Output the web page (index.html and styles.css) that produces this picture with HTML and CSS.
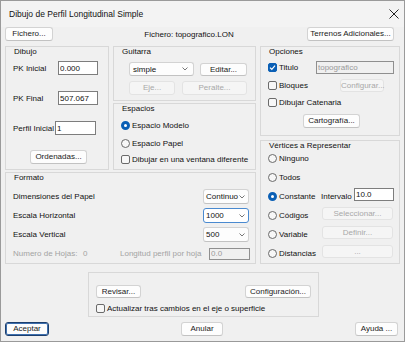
FILE: index.html
```html
<!DOCTYPE html>
<html lang="es">

<head>
    <meta charset="UTF-8">
    <title>Dibujo de Perfil Longitudinal Simple</title>
    <link rel="stylesheet" href="styles.css">
</head>

<body>
    <div class="window">
        <div class="titlebar">
            <span>Dibujo de Perfil Longitudinal Simple</span>
            <svg class="close" width="10" height="10" viewBox="0 0 10 10">
                <path d="M0.5 0.5 L9.5 9.5 M9.5 0.5 L0.5 9.5" stroke="#222" stroke-width="1" fill="none" />
            </svg>
        </div>

        <div class="content">
            <div class="toprow">
                <button class="btn w-fichero">Fichero...</button>
                <span class="filename">Fichero: topografico.LON</span>
                <button class="btn w-terrenos">Terrenos Adicionales...</button>
            </div>

            <div class="main">
                <div class="leftpart">
                    <div class="upper">
                        <!-- Dibujo -->
                        <div class="group dibujo">
                            <div class="caption">Dibujo</div>
                            <div class="field-row r-first">
                                <label class="pk-label">PK Inicial</label>
                                <input class="tb w-pk" value="0.000">
                            </div>
                            <div class="field-row r-next">
                                <label class="pk-label">PK Final</label>
                                <input class="tb w-pk" value="507.067">
                            </div>
                            <div class="field-row r-next">
                                <label class="perfil-label">Perfil Inicial</label>
                                <input class="tb w-perfil" value="1">
                            </div>
                            <button class="btn w-ordenadas">Ordenadas...</button>
                        </div>

                        <div class="midcol">
                            <!-- Guitarra -->
                            <div class="group guitarra">
                                <div class="caption">Guitarra</div>
                                <div class="btn-row g-row1">
                                    <div class="combo w-simple">
                                        <span>simple</span>
                                        <svg width="6" height="4" viewBox="0 0 6 4"><path d="M0.5 0.5 L3 3 L5.5 0.5" stroke="#777" fill="none" /></svg>
                                    </div>
                                    <button class="btn w-editar">Editar...</button>
                                </div>
                                <div class="btn-row g-row2">
                                    <button class="btn w-eje" disabled>Eje...</button>
                                    <button class="btn w-peralte" disabled>Peralte...</button>
                                </div>
                            </div>

                            <!-- Espacios -->
                            <div class="group espacios">
                                <div class="caption">Espacios</div>
                                <div class="opt e-row1"><span class="radio on"></span>Espacio Modelo</div>
                                <div class="opt e-row2"><span class="radio"></span>Espacio Papel</div>
                                <div class="opt e-row3"><span class="check"></span>Dibujar en una ventana diferente</div>
                            </div>
                        </div>
                    </div>

                    <!-- Formato -->
                    <div class="group formato">
                        <div class="caption">Formato</div>
                        <div class="formato-rows">
                            <div class="f-row">
                                <span>Dimensiones del Papel</span>
                                <div class="combo w-scale">
                                    <span>Continuo</span>
                                    <svg width="6" height="4" viewBox="0 0 6 4"><path d="M0.5 0.5 L3 3 L5.5 0.5" stroke="#777" fill="none" /></svg>
                                </div>
                            </div>
                            <div class="f-row">
                                <span>Escala Horizontal</span>
                                <div class="combo w-scale focus">
                                    <span>1000</span>
                                    <svg width="6" height="4" viewBox="0 0 6 4"><path d="M0.5 0.5 L3 3 L5.5 0.5" stroke="#777" fill="none" /></svg>
                                </div>
                            </div>
                            <div class="f-row">
                                <span>Escala Vertical</span>
                                <div class="combo w-scale">
                                    <span>500</span>
                                    <svg width="6" height="4" viewBox="0 0 6 4"><path d="M0.5 0.5 L3 3 L5.5 0.5" stroke="#777" fill="none" /></svg>
                                </div>
                            </div>
                        </div>
                        <div class="f-row hojas">
                            <span class="hojas-label">Numero de Hojas:</span>
                            <span class="hojas-num">0</span>
                            <span class="hojas-long">Longitud perfil por hoja</span>
                            <input class="tb w-longitud" value="0.0" disabled>
                        </div>
                    </div>
                </div>

                <div class="rightpart">
                    <!-- Opciones -->
                    <div class="group opciones">
                        <div class="caption">Opciones</div>
                        <div class="o-row o-first">
                            <span class="o-label"><span class="check on">
                                <svg width="7" height="7" viewBox="0 0 7 7"><path d="M1 3.6 L2.8 5.3 L6 1.6" stroke="#fff" stroke-width="1.2" fill="none" /></svg>
                            </span>Titulo</span>
                            <input class="tb w-titulo" value="topografico" disabled>
                        </div>
                        <div class="o-row o-next">
                            <span class="o-label wide"><span class="check"></span>Bloques</span>
                            <button class="btn w-configurar" disabled>Configurar...</button>
                        </div>
                        <div class="o-row o-next short">
                            <span class="o-label"><span class="check"></span>Dibujar Catenaria</span>
                        </div>
                        <button class="btn w-cartografia">Cartografía...</button>
                    </div>

                    <!-- Vertices -->
                    <div class="group vertices">
                        <div class="caption">Vértices a Representar</div>
                        <div class="v-grid">
                            <div class="opt"><span class="radio"></span>Ninguno</div>
                            <div></div>
                            <div class="opt"><span class="radio"></span>Todos</div>
                            <div></div>
                            <div class="opt"><span class="radio on"></span>Constante</div>
                            <div class="intervalo">
                                <span class="intervalo-label">Intervalo</span>
                                <input class="tb w-intervalo" value="10.0">
                            </div>
                            <div class="opt"><span class="radio"></span>Códigos</div>
                            <button class="btn w-vbtn" disabled>Seleccionar...</button>
                            <div class="opt"><span class="radio"></span>Variable</div>
                            <button class="btn w-vbtn" disabled>Definir...</button>
                            <div class="opt"><span class="radio"></span>Distancias</div>
                            <button class="btn w-vbtn" disabled>...</button>
                        </div>
                    </div>
                </div>
            </div>

            <div class="group bottom-group">
                <div class="btn-row b-row1">
                    <button class="btn w-revisar">Revisar...</button>
                    <button class="btn w-config">Configuración...</button>
                </div>
                <div class="opt b-row2"><span class="check"></span>Actualizar tras cambios en el eje o superficie</div>
            </div>

            <div class="footer">
                <button class="btn w-aceptar default">Aceptar</button>
                <button class="btn w-anular">Anular</button>
                <button class="btn w-ayuda">Ayuda ...</button>
            </div>
        </div>
    </div>
</body>

</html>
```

FILE: styles.css
```css
* {
    margin: 0;
    padding: 0;
    box-sizing: border-box;
}

body {
    font-family: 'Liberation Sans', Arial, sans-serif;
    font-size: 8px;
    color: #111;
    background: #fff;
}

.window {
    width: 405px;
    height: 342px;
    border: 1px solid #9a9a9a;
    background: #f0f0f0;
}

.titlebar {
    height: 26px;
    display: flex;
    align-items: center;
    justify-content: space-between;
    padding: 0 5px 0 8px;
    font-size: 8.5px;
    background: #f3f3f3;
}

.content {
    padding: 0 4px;
}

/* shared controls */

.btn {
    height: 14px;
    font: inherit;
    color: #1b1b1b;
    background: #fdfdfd;
    border: 1px solid #d3d3d3;
    border-bottom-color: #c2c2c2;
    border-radius: 3px;
    line-height: 12px;
    text-align: center;
    white-space: nowrap;
}

.btn:disabled {
    background: #f5f5f5;
    border-color: #e3e3e3;
    color: #a8a8a8;
}

.btn.default {
    border: 1px solid #1d3f6e;
    box-shadow: inset 0 0 0 1px #3d6fae;
}

.tb {
    height: 14px;
    font: inherit;
    color: #111;
    background: #fff;
    border: 1px solid #7d7d7d;
    padding: 0 1px;
    line-height: 12px;
    outline: none;
}

.tb:disabled {
    background: #f0f0f0;
    border-color: #8f8f8f;
    color: #9a9a9a;
}

.combo {
    height: 14px;
    display: flex;
    align-items: center;
    justify-content: space-between;
    padding: 0 3px 0 3px;
    background: #fdfdfd;
    border: 1px solid #d3d3d3;
    border-bottom-color: #c2c2c2;
    border-radius: 3px;
    white-space: nowrap;
}

.combo svg {
    flex: none;
}

.combo.focus {
    background: #fff;
    border-color: #4a8ad0;
}

.check {
    width: 9px;
    height: 9px;
    flex: none;
    display: inline-flex;
    align-items: center;
    justify-content: center;
    margin-right: 2px;
    background: #f7f7f7;
    border: 1px solid #6a6a6a;
    border-radius: 2px;
}

.check.on {
    background: #0a5fb5;
    border-color: #0a5fb5;
}

.radio {
    width: 9px;
    height: 9px;
    flex: none;
    margin-right: 2px;
    background: #f7f7f7;
    border: 1px solid #6a6a6a;
    border-radius: 50%;
}

.radio.on {
    background: #fff;
    border: 3px solid #0a5fb5;
}

.opt {
    display: flex;
    align-items: center;
    height: 12px;
    white-space: nowrap;
}

.btn-row {
    display: flex;
    align-items: center;
}

/* group boxes */

.group {
    border: 1px solid #d8d8d8;
    padding-left: 7px;
}

.caption {
    height: 9px;
    line-height: 9px;
    margin-left: 1px;
}

/* top row */

.toprow {
    display: flex;
    align-items: center;
    height: 14px;
}

.w-fichero {
    width: 48px;
}

.filename {
    flex: 1;
    text-align: center;
    padding-left: 18px;
}

.w-terrenos {
    width: 87px;
    margin-right: 6px;
}

/* main area */

.main {
    display: flex;
    gap: 4px;
    margin-top: 5px;
}

.leftpart {
    width: 251px;
    display: flex;
    flex-direction: column;
    gap: 2px;
}

.upper {
    display: flex;
    gap: 4px;
    height: 124px;
}

.midcol {
    width: 143px;
    display: flex;
    flex-direction: column;
    gap: 2px;
}

.rightpart {
    width: 140px;
    display: flex;
    flex-direction: column;
    gap: 4px;
}

/* Dibujo */

.dibujo {
    width: 104px;
}

.field-row {
    display: flex;
    align-items: center;
    height: 14px;
}

.r-first {
    margin-top: 5px;
}

.r-next {
    margin-top: 16px;
}

.pk-label {
    width: 45px;
}

.perfil-label {
    margin-right: 1px;
}

.w-pk {
    width: 40px;
}

.w-perfil {
    width: 41px;
}

.w-ordenadas {
    display: block;
    width: 57px;
    margin: 15px 0 0 17px;
}

/* Guitarra */

.guitarra {
    height: 55px;
}

.guitarra .btn-row {
    margin-left: 8px;
}

.g-row1 {
    margin-top: 6px;
}

.g-row2 {
    margin-top: 5px;
}

.w-simple {
    width: 65px;
    padding-right: 5px;
}

.w-editar {
    width: 47px;
    height: 13px;
    margin-left: 6px;
}

.w-eje {
    width: 46px;
}

.w-peralte {
    width: 65px;
    margin-left: 7px;
}

/* Espacios */

.espacios {
    height: 67px;
}

.e-row1 {
    margin-top: 6px;
}

.e-row2 {
    margin-top: 6px;
}

.e-row3 {
    margin-top: 4px;
}

/* Formato */

.formato {
    height: 92px;
    padding-right: 6px;
}

.formato-rows {
    display: grid;
    grid-template-rows: repeat(3, 15px);
    row-gap: 4px;
    margin-top: 7px;
}

.f-row {
    display: flex;
    align-items: center;
    justify-content: space-between;
}

.w-scale {
    width: 46px;
    height: 15px;
    padding-left: 2px;
}

.hojas {
    justify-content: flex-start;
    height: 13px;
    margin-top: 5px;
    color: #a3a3a3;
    white-space: nowrap;
}

.hojas-label {
    width: 70px;
    flex: none;
}

.hojas-num {
    width: 37px;
    flex: none;
}

.hojas-long {
    flex: none;
}

.w-longitud {
    width: 41px;
    height: 12px;
    margin-left: auto;
    margin-right: -1px;
    line-height: 10px;
}

/* Opciones */

.opciones {
    height: 90px;
}

.o-row {
    display: flex;
    align-items: center;
    height: 14px;
}

.o-row.short {
    height: 13px;
}

.o-first {
    margin-top: 4px;
}

.o-next {
    margin-top: 4px;
}

.o-label {
    display: flex;
    align-items: center;
    width: 48px;
    white-space: nowrap;
}

.o-label.wide {
    width: 72px;
}

.w-titulo {
    width: 78px;
    height: 13px;
    line-height: 11px;
}

.w-configurar {
    width: 44px;
    height: 13px;
}

.w-cartografia {
    display: block;
    width: 57px;
    margin: 5px 0 0 35px;
}

/* Vertices */

.vertices {
    height: 124px;
}

.v-grid {
    display: grid;
    grid-template-columns: 53px 1fr;
    grid-template-rows: repeat(6, 14px);
    row-gap: 5px;
    margin-top: 1px;
}

.v-grid .opt {
    height: 14px;
}

.intervalo {
    display: flex;
    align-items: center;
}

.intervalo-label {
    width: 33px;
}

.w-intervalo {
    width: 40px;
    height: 13px;
    line-height: 11px;
    margin-bottom: 3px;
}

.w-vbtn {
    width: 71px;
    height: 13px;
    margin: 0 0 4px 1px;
    align-self: center;
}

/* bottom group and buttons */

.bottom-group {
    width: 231px;
    height: 45px;
    margin: 8px 0 0 83px;
    padding-right: 7px;
}

.b-row1 {
    justify-content: space-between;
    margin-top: 12px;
}

.w-revisar {
    width: 45px;
    height: 13px;
}

.w-config {
    width: 66px;
    height: 13px;
}

.b-row2 {
    margin-top: 4px;
}

.footer {
    display: flex;
    justify-content: space-between;
    margin-top: 5px;
    padding-right: 2px;
}

.w-aceptar {
    width: 44px;
}

.w-anular {
    width: 42px;
}

.w-ayuda {
    width: 43px;
}
```
